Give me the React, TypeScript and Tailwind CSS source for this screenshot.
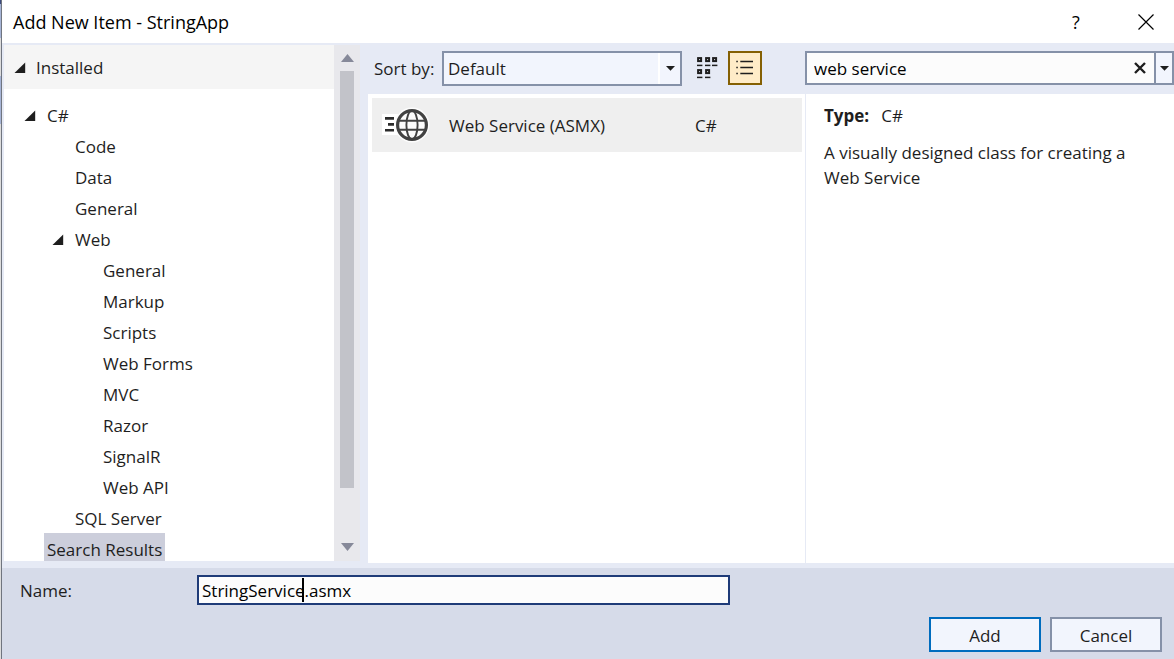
import React from "react";

type Node = { label: string; level: 0 | 1 | 2; open?: boolean; selected?: boolean };

const nodes: Node[] = [
  { label: "C#", level: 0, open: true },
  { label: "Code", level: 1 },
  { label: "Data", level: 1 },
  { label: "General", level: 1 },
  { label: "Web", level: 1, open: true },
  { label: "General", level: 2 },
  { label: "Markup", level: 2 },
  { label: "Scripts", level: 2 },
  { label: "Web Forms", level: 2 },
  { label: "MVC", level: 2 },
  { label: "Razor", level: 2 },
  { label: "SignalR", level: 2 },
  { label: "Web API", level: 2 },
  { label: "SQL Server", level: 1 },
  { label: "Search Results", level: 0, selected: true },
];

const indent = { 0: "pl-5", 1: "pl-12", 2: "pl-[76px]" };

function Expander() {
  return (
    <svg className="h-3 w-3 shrink-0" viewBox="0 0 12 12" aria-hidden="true">
      <path d="M11.2 0.5V11H0.5Z" fill="#1e1e1e" />
    </svg>
  );
}

function Caret() {
  return (
    <svg className="h-[5px] w-[9px] shrink-0" viewBox="0 0 9 5" aria-hidden="true">
      <path d="M0 0H9L4.5 4.8Z" fill="#1e1e1e" />
    </svg>
  );
}

function WebServiceIcon() {
  return (
    <svg className="h-9 w-[50px]" viewBox="0 0 50 36" fill="none" aria-hidden="true">
      <path d="M2 7H18V28H2Z" fill="#fff" />
      <circle cx="32" cy="18" r="17.5" fill="#fcfcfc" />
      <path d="M5 11.4H14M8 17.4H14M5 23.2H14" stroke="#2b2b2b" strokeWidth="2.6" />
      <circle cx="32" cy="18" r="14.4" stroke="#424242" strokeWidth="3.2" />
      <ellipse cx="32" cy="18" rx="5.6" ry="14.4" stroke="#424242" strokeWidth="1.9" />
      <path d="M18.5 13.7H45.5M18.5 22.7H45.5" stroke="#424242" strokeWidth="1.9" />
    </svg>
  );
}

function GridIcon() {
  const cells = [[1, 1], [9, 1], [16, 1], [1, 13], [9, 13]];
  return (
    <svg className="h-[22px] w-[21px]" viewBox="0 0 21 22" fill="none" aria-hidden="true">
      {cells.map(([x, y]) => (
        <g key={`${x}-${y}`} stroke="#1e1e1e">
          <rect x={x + 0.1} y={y + 0.1} width="3" height="3" strokeWidth="2" />
          <path d={`M${x - 1} ${y + 7.4}h5.4`} strokeWidth="1.5" />
        </g>
      ))}
    </svg>
  );
}

function ListIcon() {
  return (
    <svg className="h-4 w-[18px]" viewBox="0 0 18 16" aria-hidden="true">
      <path
        d="M0.3 1.5H1.8M4.3 1.5H17M0.3 7.5H1.8M4.3 7.5H17M0.3 13.5H1.8M4.3 13.5H17"
        stroke="#1e1e1e"
        strokeWidth="1.3"
      />
    </svg>
  );
}

export default function App() {
  return (
    <div className="flex min-h-screen bg-[#e6eaf5] font-['Open_Sans','Noto_Sans',sans-serif] text-[17px] leading-6 text-[#1e1e1e]">
      <div className="flex w-0.5 shrink-0 flex-col border-r border-[#70757f] bg-[#dcdcdc]">
        <div className="h-1 bg-[#3c4a7c]" />
        <div className="h-[34px] bg-[#a6b4d6]" />
        <div className="h-[38px] bg-[#dcdcdc]" />
        <div className="h-12 bg-[#a6b4d6]" />
      </div>
      <div className="flex min-w-0 grow flex-col">
        <header className="flex h-[43px] shrink-0 items-center bg-white pl-[11px] pr-5 text-black">
          <h1 className="grow text-lg">Add New Item - StringApp</h1>
          <button type="button" aria-label="Help" className="w-6 text-lg">?</button>
          <button type="button" aria-label="Close" className="ml-[50px] flex">
            <svg className="h-4 w-4" viewBox="0 0 16 16" aria-hidden="true">
              <path d="M0.5 0.5L15.5 15.5M15.5 0.5L0.5 15.5" stroke="#000" strokeWidth="1.2" />
            </svg>
          </button>
        </header>

        <main className="flex grow pb-[5px] pl-0.5">
          <nav aria-label="Templates" className="mb-0.5 mt-0.5 flex w-[356px] shrink-0">
            <div className="grow bg-white">
              <button type="button" className="flex h-11 w-full items-center gap-[10px] bg-[#f5f5f5] pl-[10px] pt-0.5">
                <Expander />
                Installed
              </button>
              <ul className="h-[472px] overflow-hidden pt-[10px]">
                {nodes.map((n, i) => (
                  <li key={i} className={`flex h-[31px] items-stretch ${indent[n.level]}`}>
                    <span className="flex w-5 items-center pt-0.5">{n.open && <Expander />}</span>
                    <button
                      type="button"
                      className={n.selected ? "bg-[#cccedb] px-[3px] pt-0.5" : "px-[3px] pt-0.5"}
                    >
                      {n.label}
                    </button>
                  </li>
                ))}
              </ul>
            </div>
            <div className="flex w-[26px] shrink-0 flex-col items-center bg-[#e8e8ec] pb-[10px] pt-[9px]">
              <svg className="h-2 w-[13px]" viewBox="0 0 13 8" aria-hidden="true">
                <path d="M6.5 0L13 8H0Z" fill="#868999" />
              </svg>
              <div className="mt-[9px] h-[417px] w-[14px] bg-[#c2c3c9]" />
              <svg className="mt-auto h-2 w-[13px]" viewBox="0 0 13 8" aria-hidden="true">
                <path d="M0 0H13L6.5 8Z" fill="#868999" />
              </svg>
            </div>
          </nav>

          <div className="ml-2 flex min-w-0 grow flex-col">
            <div className="flex h-[51px] shrink-0 items-center pb-px">
              <label htmlFor="sort" className="w-[74px] shrink-0 whitespace-nowrap pl-[6px] pt-0.5">Sort by:</label>
              <div className="grid h-[35px] w-[240px] shrink-0">
                <select
                  id="sort"
                  className="col-start-1 row-start-1 appearance-none border-2 border-[#8591a8] bg-[#f2f5fd] pl-1 pt-0.5"
                >
                  <option>Default</option>
                </select>
                <span className="pointer-events-none col-start-1 row-start-1 my-0.5 mr-0.5 flex w-[22px] items-center justify-center justify-self-end border-l-2 border-white">
                  <Caret />
                </span>
              </div>
              <button type="button" aria-label="Small icons" className="ml-[15px] flex">
                <GridIcon />
              </button>
              <button
                type="button"
                aria-label="List view"
                className="ml-[10px] flex h-[34px] w-[34px] items-center justify-center border-2 border-[#856003] bg-[#ffecc8]"
              >
                <ListIcon />
              </button>
              <div className="ml-auto flex h-[34px] w-[369px] border-2 border-[#8591a8] bg-[#fcfcfc]">
                <input
                  aria-label="Search templates"
                  defaultValue="web service"
                  className="min-w-0 grow bg-transparent pl-[7px] pt-0.5 text-black outline-none"
                />
                <button type="button" aria-label="Clear search" className="flex w-7 items-center justify-center">
                  <svg className="h-3 w-3" viewBox="0 0 12 12" aria-hidden="true">
                    <path d="M1 1L11 11M11 1L1 11" stroke="#1e1e1e" strokeWidth="2.4" />
                  </svg>
                </button>
                <button
                  type="button"
                  aria-label="Search options"
                  className="flex w-[18px] items-center justify-center border-l-2 border-[#8591a8] bg-[#f2f5fd]"
                >
                  <Caret />
                </button>
              </div>
            </div>

            <div className="flex grow bg-white">
              <section aria-label="Items" className="min-w-0 grow p-1 pr-[3px]">
                <button type="button" className="flex h-[54px] w-full items-center bg-[#efefef] pl-2 text-left">
                  <WebServiceIcon />
                  <span className="ml-[19px] w-[246px] pt-0.5">Web Service (ASMX)</span>
                  <span className="pt-0.5">C#</span>
                </button>
              </section>
              <aside className="w-[369px] shrink-0 border-l border-[#e6eaf5] pl-[18px] pr-8 pt-[10px]">
                <p>
                  <b className="mr-3">Type:</b>C#
                </p>
                <p className="mt-3 leading-[25px]">A visually designed class for creating a Web Service</p>
              </aside>
            </div>
          </div>
        </main>

        <footer className="h-[91px] shrink-0 bg-[#d6dbe9] pr-3 pt-[7px]">
          <div className="flex items-center pl-[18px]">
            <label htmlFor="name" className="w-[177px] pt-0.5">Name:</label>
            <div className="grid h-[29px] w-[533px]">
              <input
                id="name"
                defaultValue="StringService.asmx"
                className="col-start-1 row-start-1 border-2 border-[#1f3b78] bg-[#fcfcfc] pl-[3px] pt-0.5 text-black outline-none"
              />
              <span className="pointer-events-none col-start-1 row-start-1 ml-[105px] h-6 w-0.5 self-center bg-black" />
            </div>
          </div>
          <div className="mt-[13px] flex justify-end gap-[9px]">
            <button type="button" className="h-[35px] w-28 border-2 border-[#006cbe] bg-[#f2f5fd] pt-0.5">Add</button>
            <button type="button" className="h-[35px] w-28 border-2 border-[#8591a8] bg-[#f2f5fd] pt-0.5">Cancel</button>
          </div>
        </footer>
      </div>
    </div>
  );
}
